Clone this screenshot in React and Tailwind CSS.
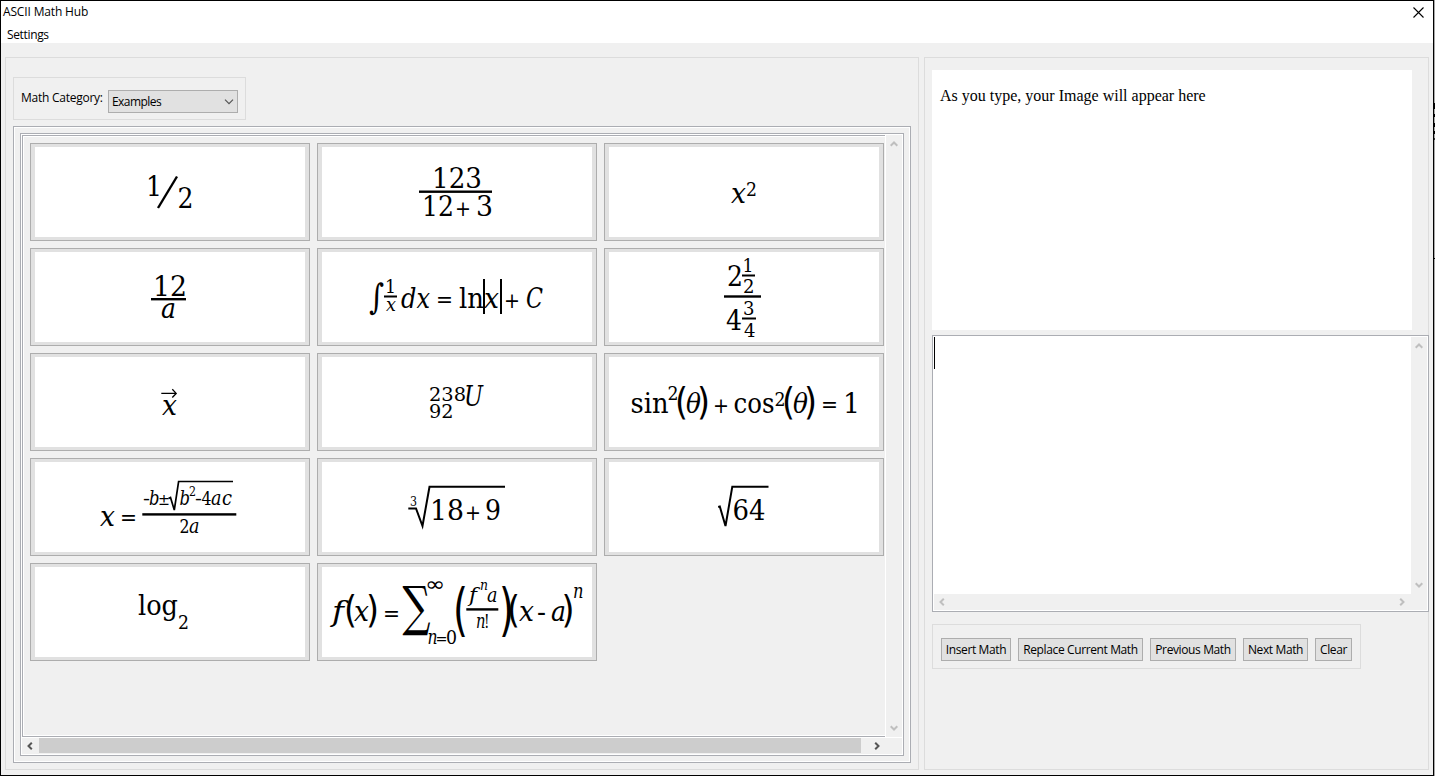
import { useState } from "react";

// text piece of a formula: x / y is the baseline start, w the advance width
function T({ x, y, s = 27.5, w, i, thin, children }) {
  return (
    <text
      x={x}
      y={y}
      fontSize={s}
      textLength={w}
      lengthAdjust="spacingAndGlyphs"
      fontStyle={i ? "italic" : "normal"}
      className={thin ? "font-['DejaVu_Sans',sans-serif]" : "font-['DejaVu_Serif','Liberation_Serif',serif]"}
    >
      {children}
    </text>
  );
}

function Bar({ x, y, w, h = 2.4 }) {
  return <rect x={x} y={y} width={w} height={h} />;
}

function Root({ d, width = 2 }) {
  return <path d={d} fill="none" stroke="black" strokeWidth={width} />;
}

const formulas = [
  {
    name: "half",
    body: (
      <>
        <T x={111} y={49} w={16}>1</T>
        <path d="M123 61L142 29.5" stroke="black" strokeWidth="2.4" />
        <T x={142.5} y={61} w={16}>2</T>
      </>
    ),
  },
  {
    name: "fraction",
    body: (
      <>
        <T x={110} y={41} w={50}>123</T>
        <Bar x={97} y={43.5} w={73} />
        <T x={100} y={69} w={32}>12</T>
        <T x={133} y={69} s={21} w={16} thin>+</T>
        <T x={154} y={69} w={17}>3</T>
      </>
    ),
  },
  {
    name: "square",
    body: (
      <>
        <T x={122} y={56} w={15} i>x</T>
        <T x={137} y={49} s={19} w={11}>2</T>
      </>
    ),
  },
  {
    name: "twelve over a",
    body: (
      <>
        <T x={118} y={44} w={34}>12</T>
        <Bar x={116} y={46} w={35} />
        <T x={126} y={66} w={15} i>a</T>
      </>
    ),
  },
  {
    name: "integral",
    body: (
      <>
        <T x={47} y={56.5} s={35} w={15}>∫</T>
        <T x={63} y={41} s={18} w={11}>1</T>
        <Bar x={62} y={43.5} w={13} h={2} />
        <T x={64} y={58.5} s={19} w={10} i>x</T>
        <T x={79} y={56} w={29} i>dx</T>
        <T x={114} y={55} s={21} w={17} thin>=</T>
        <T x={137} y={56} w={25}>ln</T>
        <Bar x={161} y={27} w={2} h={35} />
        <T x={162} y={56} w={15} i>x</T>
        <Bar x={178} y={27} w={2} h={35} />
        <T x={182} y={56} s={21} w={16} thin>+</T>
        <T x={204} y={56} w={17} i>C</T>
      </>
    ),
  },
  {
    name: "mixed numbers",
    body: (
      <>
        <T x={118} y={34} w={16}>2</T>
        <T x={133.5} y={20} s={18.5} w={11}>1</T>
        <Bar x={133} y={22.5} w={13} h={2} />
        <T x={134} y={40.5} s={18.5} w={11.5}>2</T>
        <Bar x={115} y={43.3} w={37} />
        <T x={117} y={78} w={16}>4</T>
        <T x={134} y={63} s={18.5} w={11.5}>3</T>
        <Bar x={133} y={65.5} w={14} h={2} />
        <T x={135} y={85} s={18.5} w={11.5}>4</T>
      </>
    ),
  },
  {
    name: "vector",
    body: (
      <>
        <path d="M126.3 36.4H141M137.3 32.3L141.2 36.4L137.3 40.5" fill="none" stroke="black" strokeWidth="1.3" />
        <T x={127} y={58} w={15} i>x</T>
      </>
    ),
  },
  {
    name: "uranium",
    body: (
      <>
        <T x={107} y={44} s={19} w={37}>238</T>
        <T x={107} y={61} s={19} w={24.5}>92</T>
        <T x={142} y={49} w={19} i>U</T>
      </>
    ),
  },
  {
    name: "identity",
    body: (
      <>
        <T x={21.5} y={56} w={38}>sin</T>
        <T x={58.5} y={42.7} s={18.5} w={11}>2</T>
        <T x={66} y={57} s={38} w={13} thin>(</T>
        <T x={77} y={56} w={15} i>θ</T>
        <T x={88} y={57} s={38} w={13} thin>)</T>
        <T x={104} y={56} s={21} w={16} thin>+</T>
        <T x={124.5} y={56} w={41}>cos</T>
        <T x={165.5} y={49} s={18.5} w={11}>2</T>
        <T x={173} y={57} s={38} w={13} thin>(</T>
        <T x={184} y={56} w={15} i>θ</T>
        <T x={195} y={57} s={38} w={13} thin>)</T>
        <T x={212} y={55} s={21} w={17} thin>=</T>
        <T x={234} y={56} w={17}>1</T>
      </>
    ),
  },
  {
    name: "quadratic",
    body: (
      <>
        <T x={65} y={63.7} w={15} i>x</T>
        <T x={85} y={63} s={21} w={17} thin>=</T>
        <T x={108} y={43} s={19} w={7}>-</T>
        <T x={114} y={43} s={19.5} w={10.5} i>b</T>
        <T x={123} y={43} s={15} w={12} thin>±</T>
        <Root d="M133.5 36.5L135.5 35.5L139.3 48L143.6 19.5H198" width={1.7} />
        <T x={144.5} y={43} s={19.5} w={10.5} i>b</T>
        <T x={154} y={34} s={13.5} w={7}>2</T>
        <T x={160} y={43} s={19} w={7}>-</T>
        <T x={166.5} y={43} s={18.5} w={10}>4</T>
        <T x={176} y={43} s={19.5} w={10.5} i>a</T>
        <T x={187} y={43} s={19.5} w={10} i>c</T>
        <Bar x={107.3} y={51.2} w={94} />
        <T x={144.5} y={70.7} s={18.5} w={10}>2</T>
        <T x={154} y={70.7} s={19.5} w={10.5} i>a</T>
      </>
    ),
  },
  {
    name: "cube root",
    body: (
      <>
        <T x={88} y={43.5} s={13.5} w={7}>3</T>
        <Root d="M86.3 46.5H94L100.5 64L107.5 24.7H183" />
        <T x={108} y={58} w={34}>18</T>
        <T x={143} y={58} s={21} w={16} thin>+</T>
        <T x={163} y={58} w={16}>9</T>
      </>
    ),
  },
  {
    name: "square root",
    body: (
      <>
        <Root d="M109.2 45L110.8 44.5L116.5 64L123.3 24.7H159.5" />
        <T x={123.5} y={58} w={33}>64</T>
      </>
    ),
  },
  {
    name: "logarithm",
    body: (
      <>
        <T x={103} y={48} w={40}>log</T>
        <T x={143} y={62} s={19} w={11}>2</T>
      </>
    ),
  },
  {
    name: "series",
    body: (
      <>
        <T x={10} y={54} w={12} i>f</T>
        <T x={22} y={54.5} s={38} w={13} thin>(</T>
        <T x={32} y={54} w={15} i>x</T>
        <T x={44} y={54.5} s={38} w={13} thin>)</T>
        <T x={61} y={53.5} s={21} w={17} thin>=</T>
        <T x={80.5} y={58} s={54} w={28}>∑</T>
        <T x={103} y={23.5} s={20} w={20} thin>∞</T>
        <T x={105.5} y={77} s={19.5} w={10} i>n</T>
        <T x={113.5} y={77} s={15} w={12} thin>=</T>
        <T x={124} y={77} s={18.5} w={11}>0</T>
        <T x={131} y={61.5} s={57} w={15} thin>(</T>
        <T x={147} y={34.7} s={20} w={8} i>f</T>
        <T x={158} y={23} s={14} w={8} i>n</T>
        <T x={165} y={34.7} s={19.5} w={10.5} i>a</T>
        <Bar x={144.3} y={41.2} w={32} />
        <T x={154} y={61} s={19.5} w={9.5} i>n</T>
        <T x={162} y={61} s={18.5} w={5.5}>!</T>
        <T x={177} y={61.5} s={57} w={15} thin>)</T>
        <T x={185} y={54.5} s={38} w={13} thin>(</T>
        <T x={197} y={54} w={15} i>x</T>
        <T x={215} y={54} w={9}>-</T>
        <T x={229} y={54} w={15} i>a</T>
        <T x={239.5} y={54.5} s={38} w={13} thin>)</T>
        <T x={251} y={31} s={19.5} w={10.5} i>n</T>
      </>
    ),
  },
];

const rotation = { up: "", down: "rotate-180", left: "-rotate-90", right: "rotate-90" };

function Arrow({ dir, dark }) {
  const box = dir === "up" || dir === "down" ? "h-[18px] w-[15px]" : "h-[15px] w-4";
  return (
    <span className={`flex shrink-0 items-center justify-center ${box}`}>
      <svg width="8" height="8" viewBox="0 0 8 8" className={rotation[dir]}>
        <path d="M0.7 5.8L4 2.5L7.3 5.8" fill="none" stroke={dark ? "#555555" : "#bfbfbf"} strokeWidth="2" />
      </svg>
    </span>
  );
}

function Btn({ className, children }) {
  return (
    <button className={`h-[23px] border border-[#adadad] bg-[#e1e1e1] tracking-[-0.38px] whitespace-nowrap ${className}`}>
      {children}
    </button>
  );
}

export default function App() {
  const [source, setSource] = useState("");

  return (
    <div className="flex h-[776px] w-[1435px] overflow-hidden bg-[#a8a8a8] font-['Open_Sans','Noto_Sans',sans-serif] text-[12px] leading-4 tracking-[-0.25px] text-black">
      <div className="flex w-[1434px] flex-col border border-black bg-[#f0f0f0]">
        {/* Title bar */}
        <header className="flex h-[22px] items-center justify-between bg-white pr-[9px] pl-[2px]">
          <span className="tracking-[-0.15px]">ASCII Math Hub</span>
          <svg width="11" height="11" viewBox="0 0 11 11">
            <path d="M0.5 0.5L10.5 10.5M10.5 0.5L0.5 10.5" stroke="black" strokeWidth="1.1" />
          </svg>
        </header>
        <nav className="flex h-5 bg-white pt-1 pl-[6px]">
          <span className="tracking-[-0.35px]">Settings</span>
        </nav>

        <main className="flex gap-[5px] pt-[14px] pl-1">
          {/* Left side: category and formula list */}
          <section className="h-[713px] w-[914px] border border-[#dcdcdc] pt-[19px] pl-[7px]">
            <div className="flex h-[43px] w-[233px] border border-[#dcdcdc] pl-[7px]">
              <span className="mt-3 w-[87px]">Math Category:</span>
              <button className="mt-3 flex h-[23px] w-[130px] items-center justify-between border border-[#adadad] bg-[#e1e1e1] pr-[3px] pl-[3px]">
                <span className="tracking-[-0.55px]">Examples</span>
                <svg width="10" height="6" viewBox="0 0 10 6">
                  <path d="M1 0.7L5 4.7L9 0.7" fill="none" stroke="#555555" strokeWidth="1.2" />
                </svg>
              </button>
            </div>

            <div className="mt-[6px] h-[637px] w-[898px] border border-[#abadb3]">
              <div className="h-full border border-white p-[5px]">
                <div className="h-[623px] w-[884px] border border-[#abadb3]">
                  <div className="flex h-full flex-col border border-white">
                    <div className="flex h-[602px]">
                      <div className="w-[863px] border-y border-l border-[#abadb3]">
                        <div className="h-full border border-r-0 border-white pt-[6px] pl-[6px]">
                          <div className="grid grid-cols-[280px_280px_280px] gap-[7px]">
                            {formulas.map((f) => (
                              <button
                                key={f.name}
                                className="h-[98px] w-[280px] border border-[#adadad] bg-[#e1e1e1] px-1 py-[3px]"
                              >
                                <svg width="270" height="90" viewBox="0 0 270 90" className="block bg-white tracking-normal">
                                  {f.body}
                                </svg>
                              </button>
                            ))}
                          </div>
                        </div>
                      </div>
                      <div className="flex w-[17px] flex-col justify-between border-l border-white">
                        <Arrow dir="up" />
                        <Arrow dir="down" />
                      </div>
                    </div>
                    <div className="flex h-[17px] border-t border-white pr-[17px]">
                      <Arrow dir="left" dark />
                      <div className="ml-px h-[15px] w-[822px] bg-[#cdcdcd]" />
                      <span className="ml-auto"><Arrow dir="right" dark /></span>
                    </div>
                  </div>
                </div>
              </div>
            </div>
          </section>

          {/* Right side: preview and editor */}
          <section className="h-[713px] w-[505px] border border-[#dcdcdc] pt-3 pl-[7px]">
            <div className="h-[260px] w-[480px] bg-white px-2 pt-4 font-['Liberation_Serif',serif] text-[16px] leading-[19px] tracking-normal">
              As you type, your Image will appear here
            </div>

            <div className="mt-[5px] h-[277px] w-[497px] border border-[#abadb3]">
              <div className="flex h-full flex-col border border-white">
                <div className="flex h-[257px]">
                  <div className="flex w-[477px] bg-white">
                    <span className="h-8 w-px shrink-0 bg-black" />
                    <textarea
                      value={source}
                      onChange={(e) => setSource(e.target.value)}
                      className="h-full flex-1 resize-none text-2xl outline-none"
                    />
                  </div>
                  <div className="flex w-4 flex-col justify-between">
                    <Arrow dir="up" />
                    <Arrow dir="down" />
                  </div>
                </div>
                <div className="flex h-4 justify-between pr-[17px]">
                  <Arrow dir="left" />
                  <Arrow dir="right" />
                </div>
              </div>
            </div>

            <div className="mt-3 flex h-[45px] w-[429px] gap-[7px] border border-[#dcdcdc] pt-[13px] pl-2">
              <Btn className="w-[70px]">Insert Math</Btn>
              <Btn className="w-[125px]">Replace Current Math</Btn>
              <Btn className="w-[86px]">Previous Math</Btn>
              <Btn className="w-[65px]">Next Math</Btn>
              <Btn className="w-[37px]">Clear</Btn>
            </div>
          </section>
        </main>
      </div>

      {/* sliver of the window behind */}
      <div className="flex w-px flex-col">
        <div className="mt-[103px] h-[6px] bg-black" />
        <div className="mt-[5px] h-[3px] bg-black" />
        <div className="mt-[6px] h-1 bg-black" />
        <div className="mt-1 h-[3px] bg-black" />
        <div className="mt-1 h-[2px] bg-[#333333]" />
        <div className="mt-[118px] h-px bg-black" />
      </div>
    </div>
  );
}
